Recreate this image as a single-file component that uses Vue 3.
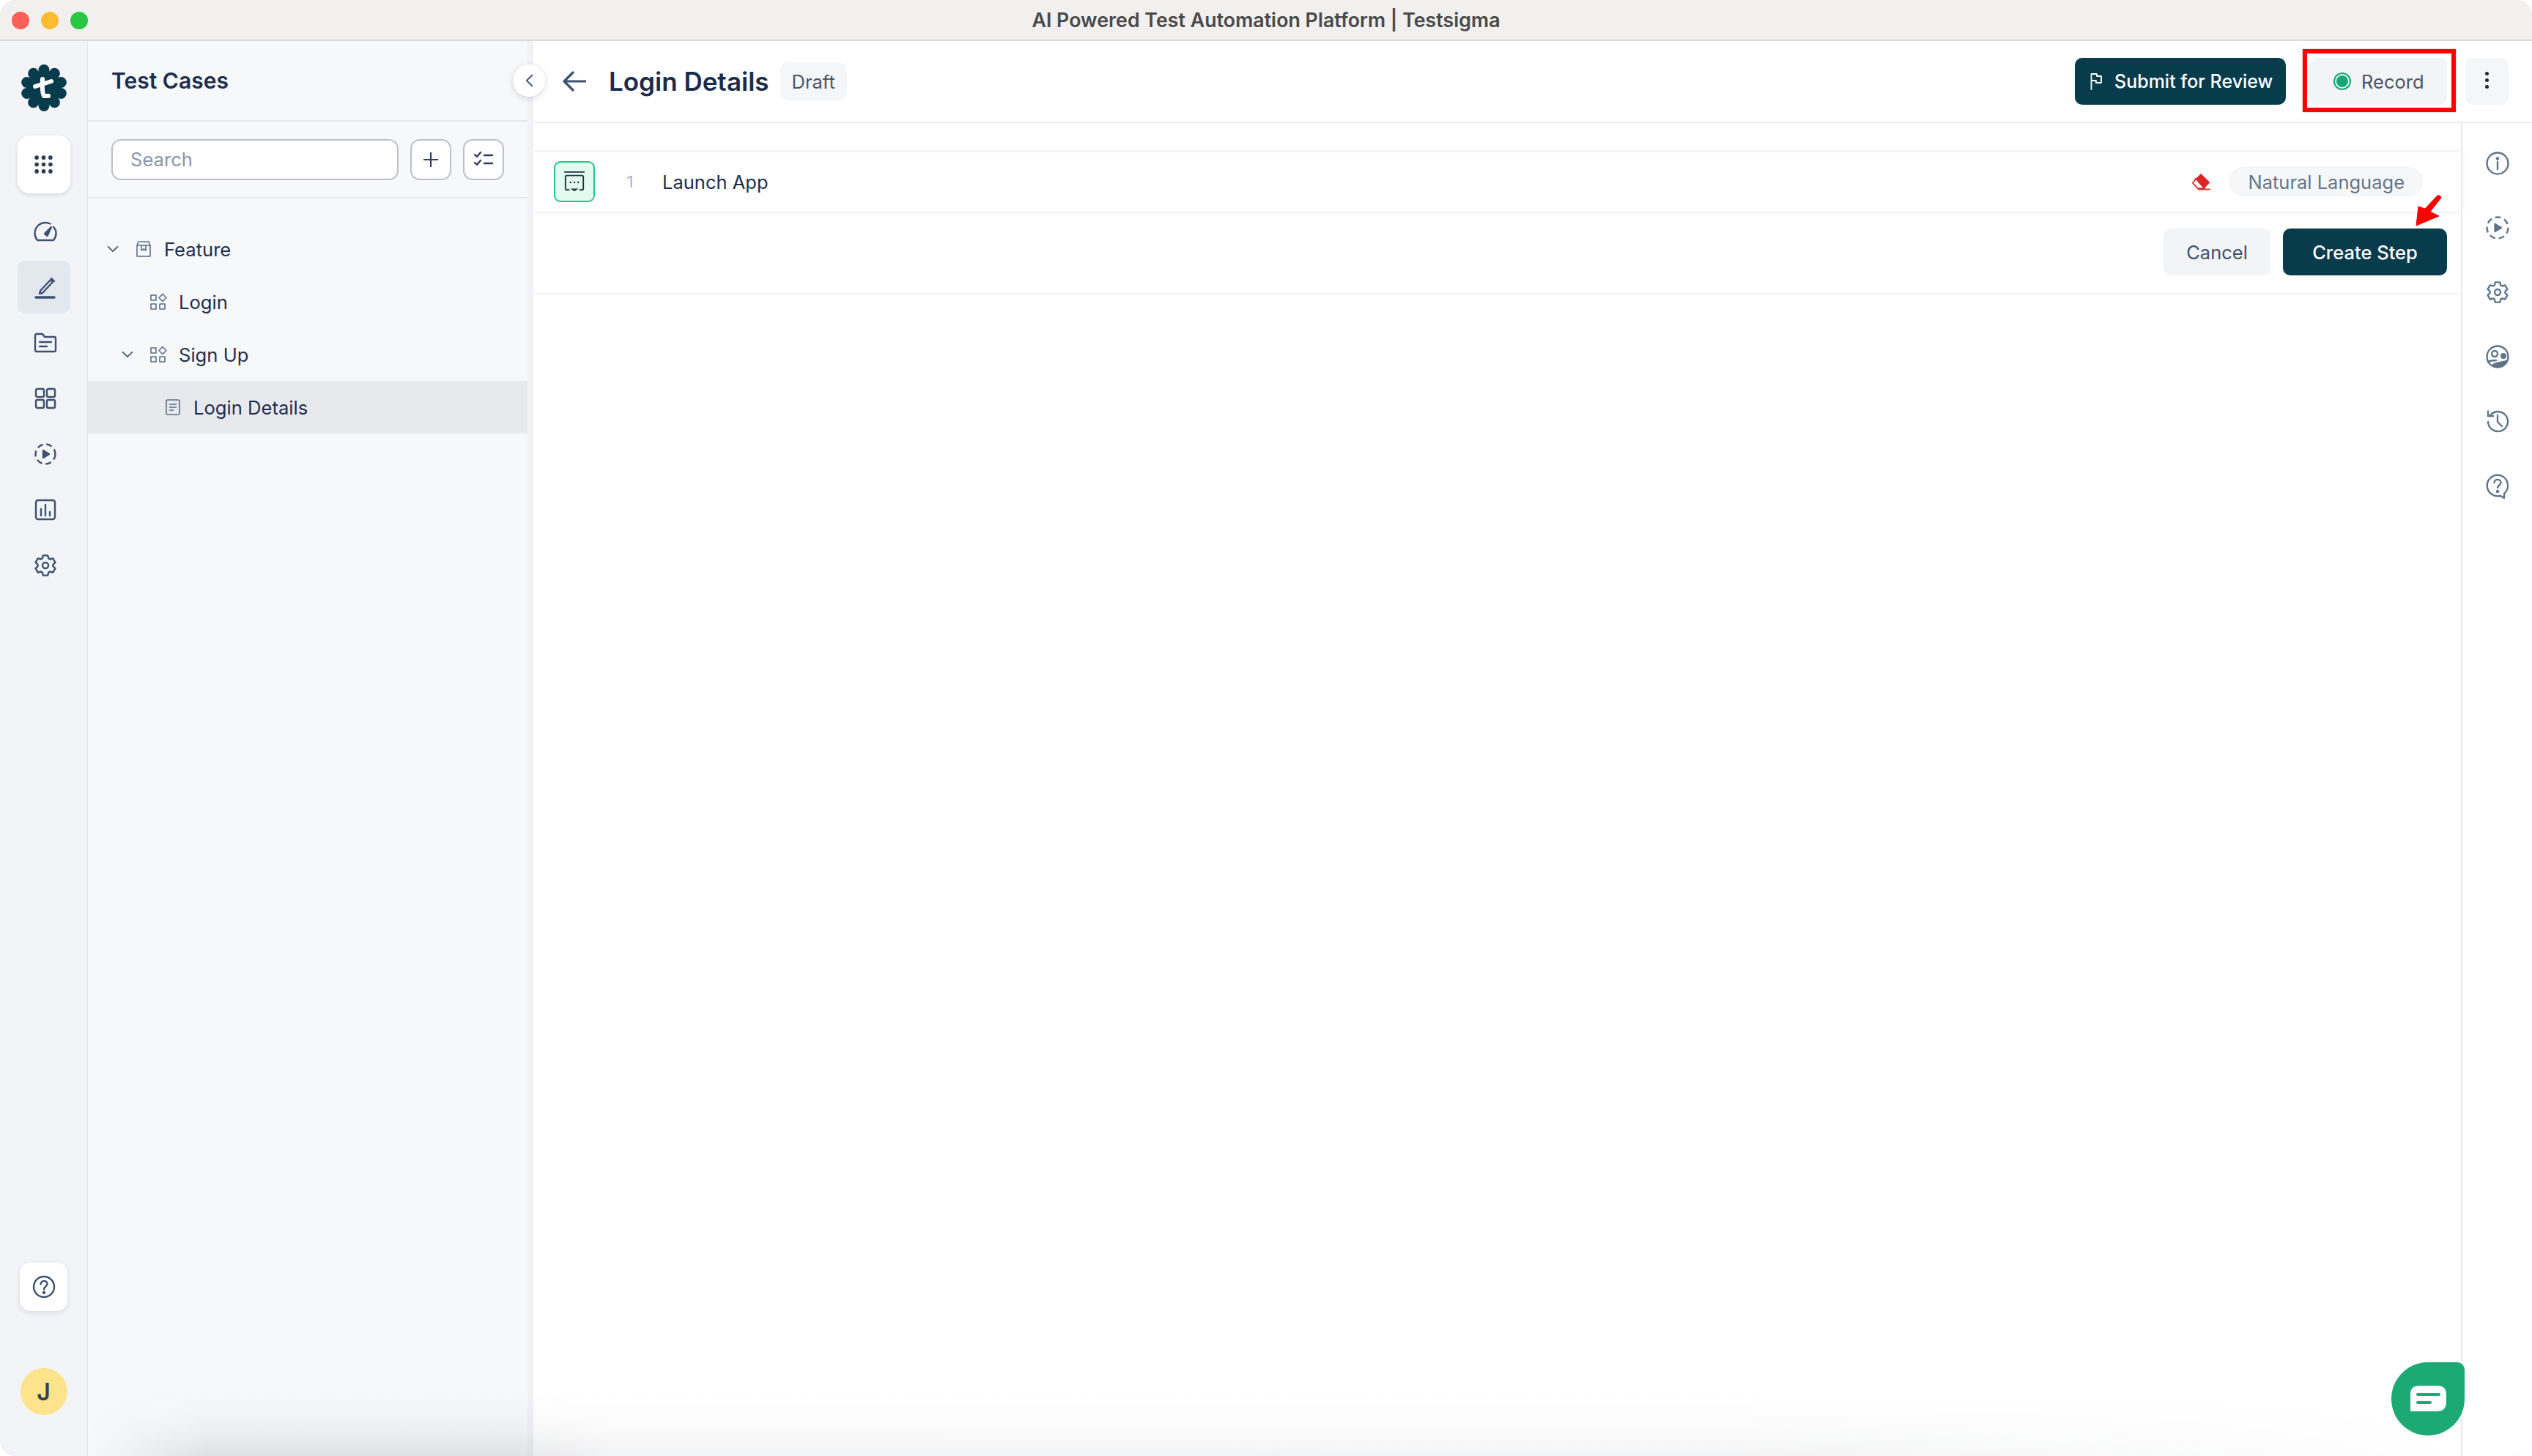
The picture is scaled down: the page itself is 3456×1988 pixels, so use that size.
<template>
  <div class="window">
    <header class="titlebar">
      <div class="lights">
        <span class="light light--red"></span>
        <span class="light light--amber"></span>
        <span class="light light--green"></span>
      </div>
      <span class="window-title">AI Powered Test Automation Platform | Testsigma</span>
    </header>

    <div class="app">
      <!-- Left rail -->
      <aside class="rail">
        <svg class="logo" viewBox="0 0 64 64">
          <circle cx="32" cy="32" r="24" fill="#083b4c" />
          <circle v-for="(b, i) in logoBumps" :key="i" :cx="b.x" :cy="b.y" r="7.5" fill="#083b4c" />
          <path d="M30 20 C29.500 30 30 40 32 43 L38 43 M20 30 L42 23" fill="none" stroke="#fff" stroke-width="6" stroke-linecap="round" stroke-linejoin="round" />
        </svg>

        <button class="rail-card rail-card--apps">
          <svg class="rail-dots" viewBox="0 0 24 24" fill="#2e3d52">
            <template v-for="y in [3, 12, 21]" :key="y">
              <circle v-for="x in [3, 12, 21]" :key="x" :cx="x" :cy="y" r="2.7" />
            </template>
          </svg>
        </button>

        <nav class="rail-nav">
          <a class="rail-item">
            <svg viewBox="0 0 32 32" class="ico">
              <path d="M22.500 5.500 C20.500 4.500 18.500 4 16 4 A14.500 14.500 0 0 0 1.500 18.500 C1.500 22 2.500 25 5 28 H27 C29.500 25 30.500 22 30.500 18.500 C30.500 15.500 29.500 12.500 27 10" />
              <path d="M15 19 L24 10 L18.500 22 Z" fill="currentColor" />
            </svg>
          </a>
          <a class="rail-item rail-item--active">
            <svg viewBox="0 0 32 32" class="ico">
              <path d="M9 21 L8 25 L12 24 L26 9 L23 6 Z" />
              <path d="M24 4 L28 8" />
              <path d="M3 30 H28" stroke-width="3.400" />
            </svg>
          </a>
          <a class="rail-item">
            <svg viewBox="0 0 32 32" class="ico">
              <path d="M2 6 Q2 4 4 4 H12 L15 8 H28 Q30 8 30 10 V26 Q30 28 28 28 H4 Q2 28 2 26 Z" />
              <path d="M8 15 H24 M8 21 H18" />
            </svg>
          </a>
          <a class="rail-item">
            <svg viewBox="0 0 32 32" class="ico">
              <rect x="3" y="3" width="11" height="11" rx="2" />
              <rect x="18" y="3" width="11" height="11" rx="2" />
              <rect x="3" y="18" width="11" height="11" rx="2" />
              <rect x="18" y="18" width="11" height="11" rx="2" />
            </svg>
          </a>
          <a class="rail-item">
            <svg viewBox="0 0 32 32" class="ico">
              <circle class="dashed" cx="16" cy="16" r="13.500" />
              <path d="M13 11 L21 16 L13 21 Z" fill="currentColor" />
            </svg>
          </a>
          <a class="rail-item">
            <svg viewBox="0 0 32 32" class="ico">
              <rect x="3" y="3" width="26" height="26" rx="3" />
              <path d="M10 15 V24 M16 9 V24 M22 19 V24" />
            </svg>
          </a>
          <a class="rail-item">
            <svg viewBox="0 0 32 32" class="ico">
              <path :d="gearPath" />
              <circle cx="16" cy="16" r="4" />
            </svg>
          </a>
        </nav>

        <button class="rail-card rail-card--help">
          <svg viewBox="0 0 32 32" class="ico">
            <circle cx="16" cy="16" r="14" />
            <path d="M11.500 12.500 C11.500 6.500 20.500 6.500 20.500 12 C20.500 15.500 16 15.500 16 19.500" />
            <circle cx="16" cy="24" r="1" fill="currentColor" />
          </svg>
        </button>
        <div class="avatar">J</div>
      </aside>

      <!-- Tree panel -->
      <section class="panel">
        <div class="panel-head">
          <h2 class="panel-title">Test Cases</h2>
        </div>
        <div class="panel-tools">
          <input class="search" placeholder="Search" />
          <button class="tool-btn">
            <svg viewBox="0 0 24 24" class="tool-ico"><path d="M12 2 V22 M2 12 H22" /></svg>
          </button>
          <button class="tool-btn">
            <svg viewBox="0 0 28 24" class="tool-ico tool-ico--thin">
              <path d="M2 5 L5 8 L10 2 M2 16 L5 19 L10 13 M15 6 H26 M15 17 H26" />
            </svg>
          </button>
        </div>
        <ul class="tree">
          <li
            v-for="row in rows"
            :key="row.label"
            class="tree-row"
            :class="{ 'tree-row--active': row.active }"
            :style="{ paddingLeft: 24 + row.depth * 20 + 'px' }"
          >
            <span class="tree-caret">
              <svg v-if="row.open" viewBox="0 0 20 12" class="caret-ico"><path d="M2 2 L10 10 L18 2" /></svg>
            </span>
            <svg viewBox="0 0 24 24" class="tree-ico">
              <template v-if="row.icon === 'feature'">
                <path d="M3 7 L5 2 H19 L21 7 V22 H3 Z M3 7 H21 M9 7 V14 L12 12 L15 14 V7" />
              </template>
              <template v-else-if="row.icon === 'module'">
                <rect x="2" y="3" width="7" height="7" />
                <path d="M18 1.500 L23 6.500 L18 11.500 L13 6.500 Z" />
                <rect x="2" y="15" width="7" height="7" />
                <rect x="14" y="15" width="7" height="7" />
              </template>
              <template v-else>
                <rect x="3" y="2" width="18" height="20" rx="2" />
                <path d="M7 8 H17 M7 12 H17 M7 16 H13" />
              </template>
            </svg>
            <span class="tree-label">{{ row.label }}</span>
          </li>
        </ul>
      </section>
      <div class="panel-strip">
        <button class="collapse">
          <svg viewBox="0 0 12 20"><path d="M10 2 L2 10 L10 18" /></svg>
        </button>
      </div>

      <!-- Main -->
      <main class="main">
        <header class="main-head">
          <svg class="back" viewBox="0 0 32 28"><path d="M14 2 L2 14 L14 26 M2 14 H31" /></svg>
          <h1 class="main-title">Login Details</h1>
          <span class="draft">Draft</span>
          <div class="head-actions">
            <button class="btn btn--dark btn--submit">
              <svg viewBox="0 0 16 24" class="flag"><path d="M1.500 23 V2 H9 V5 H15 V14 H8 V11 H1.500" /></svg>
              Submit for Review
            </button>
            <button class="btn btn--light btn--record">
              <span class="rec-dot"></span>
              Record
              <span class="highlight-box"></span>
            </button>
            <button class="btn btn--light btn--more">
              <span class="more-dots"><i></i><i></i><i></i></span>
            </button>
          </div>
        </header>

        <div class="main-body">
          <div class="steps">
            <div class="step">
              <div class="step-tile">
                <svg viewBox="0 0 32 32">
                  <path d="M2 2 H30" stroke-width="2" />
                  <path d="M8 28 H5 Q3 28 3 26 V9 Q3 7 5 7 H27 Q29 7 29 9 V26 Q29 28 27 28 H24" stroke-width="2" />
                  <path d="M10 30 H22 L16 34 Z" transform="translate(0,-4)" fill="#1f2f3a" stroke="none" />
                  <circle cx="10.500" cy="17" r="1.300" fill="#1f2f3a" stroke="none" />
                  <circle cx="16" cy="17" r="1.300" fill="#1f2f3a" stroke="none" />
                  <circle cx="21.500" cy="17" r="1.300" fill="#1f2f3a" stroke="none" />
                </svg>
              </div>
              <span class="step-num">1</span>
              <span class="step-text">Launch App</span>
              <svg class="eraser" viewBox="0 0 25 23">
                <polygon points="12,0 24.400,12 17,20 5,7" fill="#dc2626" />
                <polygon points="5,7 1,13 8,20.500 17,20.500" fill="none" stroke="#dc2626" stroke-width="1.800" />
                <path d="M8 21.500 H25" stroke="#dc2626" stroke-width="1.800" />
              </svg>
              <span class="lang-pill">Natural Language</span>
            </div>
            <div class="step-actions">
              <button class="btn btn--light btn--cancel">Cancel</button>
              <button class="btn btn--dark btn--create">
                Create Step
                <svg class="red-arrow" viewBox="0 0 38 44">
                  <path d="M31 1 Q35 0 36 4 L21 23 L33 29 L2 42 L5 16 L14 19 Z" fill="#f00" stroke="#f00" stroke-linejoin="round" />
                </svg>
              </button>
            </div>
          </div>

          <aside class="side-tools">
            <svg viewBox="0 0 32 32" class="ico">
              <circle cx="16" cy="16" r="14.500" />
              <path d="M16 14 V24" />
              <circle cx="16" cy="9.500" r="1" fill="currentColor" />
            </svg>
            <svg viewBox="0 0 32 32" class="ico">
              <circle class="dashed" cx="16" cy="16" r="14.500" />
              <path d="M12.500 11 L21 16 L12.500 21 Z" fill="currentColor" />
            </svg>
            <svg viewBox="0 0 32 32" class="ico">
              <path :d="gearPath" />
              <circle cx="16" cy="16" r="4" />
            </svg>
            <svg viewBox="0 0 32 32" class="ico">
              <circle cx="16" cy="16" r="14.500" />
              <circle cx="12" cy="12" r="4" />
              <circle cx="24" cy="15" r="4" fill="currentColor" stroke="none" />
              <path d="M8 28 C12 22 20 24 30 20 C28 26 22 30 16 30 C13 30 10 30 8 28 Z" fill="currentColor" stroke="none" />
              <path d="M3 23 C6 21 10 21 14 21" />
            </svg>
            <svg viewBox="0 0 32 32" class="ico">
              <path d="M6 8 A13.500 13.500 0 1 1 3 17" />
              <path d="M3 2.500 V9 H10" />
              <path d="M16 8 V17 L22 23" />
            </svg>
            <svg viewBox="0 0 32 32" class="ico">
              <path d="M16 1.500 A14.500 14.500 0 1 0 20 30 L25 33 L25 27 A14.500 14.500 0 0 0 16 1.500 Z" />
              <path d="M11.500 12 C11.500 6.500 20.500 6.500 20.500 12 C20.500 15.500 16 15.500 16 19" />
              <circle cx="16" cy="24" r="1" fill="currentColor" />
            </svg>
          </aside>
        </div>
      </main>
    </div>

    <div class="bottom-fade"></div>
    <button class="chat-fab">
      <svg viewBox="0 0 49 36">
        <path d="M0 12 Q0 0 12 0 H37 Q49 0 49 12 V22 Q49 35 36 35 H0 Z" fill="#fff" />
        <path d="M10 12 H39 M10 23 H27" stroke="#1ca974" stroke-width="4" stroke-linecap="round" />
      </svg>
    </button>
  </div>
</template>

<script setup>
const rows = [
  { label: 'Feature', depth: 0, open: true, icon: 'feature' },
  { label: 'Login', depth: 1, open: false, icon: 'module' },
  { label: 'Sign Up', depth: 1, open: true, icon: 'module' },
  { label: 'Login Details', depth: 2, open: false, icon: 'doc', active: true }
];

// scallops around the logo badge
const logoBumps = Array.from({ length: 10 }, (_, i) => {
  const a = ((i * 36 - 90) * Math.PI) / 180;
  return { x: 32 + 24.5 * Math.cos(a), y: 32 + 24.5 * Math.sin(a) };
});

// six toothed gear outline, tooth pointing up
const gearPath = (() => {
  const pts = [];
  for (let i = 0; i < 6; i++) {
    const c = i * 60 - 90;
    const p = (deg, r) => {
      const a = (deg * Math.PI) / 180;
      return `${(16 + r * Math.cos(a)).toFixed(2)} ${(16 + r * Math.sin(a)).toFixed(2)}`;
    };
    pts.push(p(c - 24, 10.5), p(c - 13, 14), p(c + 13, 14), p(c + 24, 10.5));
  }
  return 'M' + pts.join(' L') + ' Z';
})();
</script>

<style>
html, body { margin: 0; background: #fff; }
</style>

<style scoped>
.window {
  position: relative;
  width: 100%;
  height: 100vh;
  display: flex;
  flex-direction: column;
  overflow: hidden;
  border-radius: 22px;
  box-shadow: inset 0 0 0 1px #d4d4d6;
  font-family: Inter, "Noto Sans", sans-serif;
  color: #1e2d4d;
}
button { font-family: inherit; border: none; padding: 0; cursor: pointer; }
.ico { width: 32px; height: 32px; fill: none; stroke: currentColor; stroke-width: 2.4; stroke-linecap: round; stroke-linejoin: round; overflow: visible; }
.dashed { stroke-dasharray: 8 4.900; stroke-linecap: butt; }

/* Title bar */
.titlebar { position: relative; flex: 0 0 56px; box-sizing: border-box; display: flex; align-items: center; justify-content: center; background: #f1f0ee; border-bottom: 2px solid #d9d9d9; }
.lights { position: absolute; left: 16px; top: 16px; display: flex; gap: 16px; }
.light { width: 24px; height: 24px; border-radius: 50%; }
.light--red { background: #ff5f57; }
.light--amber { background: #febc2e; }
.light--green { background: #28c840; }
.window-title { font-size: 26.800px; font-weight: 600; color: #4a4a4a; }

.app { flex: 1; display: flex; min-height: 0; }

/* Rail */
.rail { flex: 0 0 120px; box-sizing: border-box; display: flex; flex-direction: column; align-items: center; padding: 32px 0 56px; background: #f3f4f7; border-right: 1px solid #e3e5e9; color: #3d5170; }
.logo { width: 64px; height: 64px; overflow: visible; }
.rail-card { background: #fff; box-shadow: 0 2px 6px rgba(30, 45, 77, .14); display: flex; align-items: center; justify-content: center; color: #3d5170; }
.rail-card--apps { width: 72px; height: 79px; margin-top: 33px; border-radius: 16px; }
.rail-dots { width: 25px; height: 25px; }
.rail-nav { display: flex; flex-direction: column; gap: 4px; margin-top: 16px; }
.rail-item { width: 72px; height: 72px; box-sizing: border-box; padding-left: 4px; display: flex; align-items: center; justify-content: center; border-radius: 10px; }
.rail-item--active { background: #e3e7ee; }
.rail-card--help { width: 65px; height: 66px; margin-top: auto; border-radius: 14px; }
.avatar { width: 64px; height: 64px; margin-top: 78px; border-radius: 50%; background: #fde48c; color: #374151; font-size: 32px; font-weight: 600; display: flex; align-items: center; justify-content: center; }

/* Tree panel */
.panel { flex: 0 0 600px; background: #f7f8fa; display: flex; flex-direction: column; }
.panel-head { height: 110px; box-sizing: border-box; display: flex; align-items: center; padding-left: 32px; border-bottom: 2px solid #e5e7eb; }
.panel-title { margin: 0; font-size: 30px; font-weight: 600; color: #1e2d4d; }
.panel-tools { height: 105px; box-sizing: border-box; display: flex; align-items: center; gap: 16px; padding-left: 32px; border-bottom: 2px solid #e5e7eb; }
.search { width: 392px; height: 56px; box-sizing: border-box; border: 2px solid #b8c0cc; border-radius: 13px; background: #fff; padding: 0 24px; font: 400 25.600px Inter, sans-serif; outline: none; }
.search::placeholder { color: #8a95a5; }
.tool-btn { width: 56px; height: 56px; box-sizing: border-box; border: 2px solid #b8c0cc; border-radius: 13px; background: #fff; display: flex; align-items: center; justify-content: center; }
.tool-ico { width: 22px; height: 22px; fill: none; stroke: #2e3d55; stroke-width: 2.4; stroke-linecap: round; }
.tool-ico--thin { width: 28px; height: 24px; stroke-linejoin: round; }
.tree { list-style: none; margin: 0; padding: 33px 0 0; }
.tree-row { height: 72px; display: flex; align-items: center; box-sizing: border-box; }
.tree-row--active { background: #e8e9ed; }
.tree-caret { flex: 0 0 20px; margin-right: 20px; display: flex; }
.caret-ico { width: 16px; height: 10px; margin-left: 2px; fill: none; stroke: #4a5a70; stroke-width: 2.2; stroke-linecap: round; stroke-linejoin: round; }
.tree-ico { flex: 0 0 24px; width: 24px; height: 24px; margin-right: 16px; fill: none; stroke: #5d6d85; stroke-width: 1.600; stroke-linejoin: round; overflow: visible; }
.tree-label { font-size: 25.600px; color: #1e2d4d; }

.panel-strip { position: relative; flex: 0 0 8px; background: #f1f2f5; }
.collapse { position: absolute; left: -20px; top: 32px; z-index: 3; width: 44px; height: 44px; border-radius: 50%; background: #fff; box-shadow: 0 2px 8px rgba(30, 45, 77, .18); display: flex; align-items: center; justify-content: center; }
.collapse svg { width: 11px; height: 20px; fill: none; stroke: #4b5a70; stroke-width: 2.2; stroke-linecap: round; stroke-linejoin: round; }

/* Main */
.main { flex: 1; min-width: 0; display: flex; flex-direction: column; background: #fff; }
.main-head { flex: 0 0 112px; box-sizing: border-box; display: flex; align-items: center; padding: 0 32px 0 40px; border-bottom: 2px solid #eceef1; }
.back { width: 32px; height: 28px; fill: none; stroke: #3e5170; stroke-width: 3.2; stroke-linecap: round; stroke-linejoin: round; }
.main-title { margin: 0 0 0 31px; font-size: 35px; font-weight: 600; color: #1a2b4c; white-space: nowrap; }
.draft { margin-left: 15px; height: 52px; padding: 0 16px; display: flex; align-items: center; border-radius: 11px; background: #f5f6f8; font-size: 25.500px; color: #4b5563; }
.head-actions { margin-left: auto; display: flex; align-items: center; }

.btn { height: 64px; border-radius: 10px; font-size: 25.500px; font-weight: 500; display: flex; align-items: center; justify-content: center; position: relative; white-space: nowrap; }
.btn--dark { background: #083b4c; color: #fff; }
.btn--light { background: #f3f4f6; color: #4b5563; }
.btn--submit { width: 288px; gap: 17px; justify-content: flex-start; padding-left: 21px; font-size: 25px; }
.flag { width: 16px; height: 24px; fill: none; stroke: #fff; stroke-width: 1.8; stroke-linejoin: round; stroke-linecap: round; }
.btn--record { width: 188px; margin-left: 32px; gap: 14px; font-weight: 400; justify-content: flex-start; padding-left: 37px; }
.rec-dot { width: 16px; height: 16px; border-radius: 50%; background: #10a974; box-shadow: 0 0 0 2px #f3f4f6, 0 0 0 4px #10a974; margin-right: 4px; }
.highlight-box { position: absolute; left: -9px; right: -12px; top: -12px; bottom: -10px; border: 6px solid #f00; box-shadow: 0 0 2px rgba(0, 0, 0, .3); pointer-events: none; }
.btn--more { width: 59px; margin-left: 25px; background: #f5f6f8; }
.more-dots { display: flex; flex-direction: column; gap: 4px; margin-top: -4px; }
.more-dots i { width: 5px; height: 5px; border-radius: 50%; background: #1f2937; }

.main-body { flex: 1; display: flex; min-height: 0; }
.steps { flex: 1; min-width: 0; padding-top: 40px; }
.step { height: 80px; display: flex; align-items: center; padding: 0 52px 0 28px; background: #fff; box-shadow: 0 0 8px rgba(30, 45, 77, .12); }
.step-tile { width: 56px; height: 56px; box-sizing: border-box; border: 2px solid #22c58b; border-radius: 9px; background: #e2fbf1; display: flex; align-items: center; justify-content: center; }
.step-tile svg { width: 30px; height: 30px; fill: none; stroke: #1f2f3a; stroke-linecap: round; overflow: visible; }
.step-num { width: 16px; margin-left: 40px; text-align: center; font-size: 22px; color: #a7b3c5; }
.step-text { margin-left: 36px; font-size: 25.500px; color: #1e2d4d; }
.eraser { width: 25px; height: 23px; margin-left: auto; overflow: visible; }
.lang-pill { margin-left: 26px; height: 40px; padding: 0 24px; box-sizing: border-box; display: flex; align-items: center; border: 1px solid #eef0f3; border-radius: 20px; background: #f6f7f9; font-size: 25.500px; color: #64748b; }
.step-actions { display: flex; justify-content: flex-end; gap: 17px; padding: 24px 19px 24px 0; border-bottom: 2px solid #f3f4f6; }
.btn--cancel { width: 146px; color: #3e5170; font-weight: 400; }
.btn--create { width: 224px; }
.red-arrow { position: absolute; left: 180px; top: -46px; width: 38px; height: 44px; overflow: visible; }

.side-tools { flex: 0 0 97px; box-sizing: border-box; border-left: 2px solid #e8eaed; display: flex; flex-direction: column; align-items: center; gap: 56px; padding-top: 39px; color: #5f7388; }

/* Bottom shade + chat */
.bottom-fade {
  position: absolute; left: 120px; right: 90px; bottom: 0; height: 90px; pointer-events: none;
  background: linear-gradient(to top, rgba(20, 30, 50, .1), rgba(20, 30, 50, .05) 30%, rgba(20, 30, 50, .015) 65%, rgba(20, 30, 50, 0));
  -webkit-mask-image: linear-gradient(to right, transparent 0, #000 160px, #000 18%, rgba(0, 0, 0, .55) 22%, rgba(0, 0, 0, .5) 70%, transparent 100%);
  mask-image: linear-gradient(to right, transparent 0, #000 160px, #000 18%, rgba(0, 0, 0, .55) 22%, rgba(0, 0, 0, .5) 70%, transparent 100%);
}
.chat-fab { position: absolute; left: 3264px; top: 1860px; width: 100px; height: 100px; border-radius: 50% 10px 50% 50%; background: #1ca974; display: flex; align-items: center; justify-content: center; }
.chat-fab svg { width: 49px; height: 36px; margin-top: -1px; }
</style>
